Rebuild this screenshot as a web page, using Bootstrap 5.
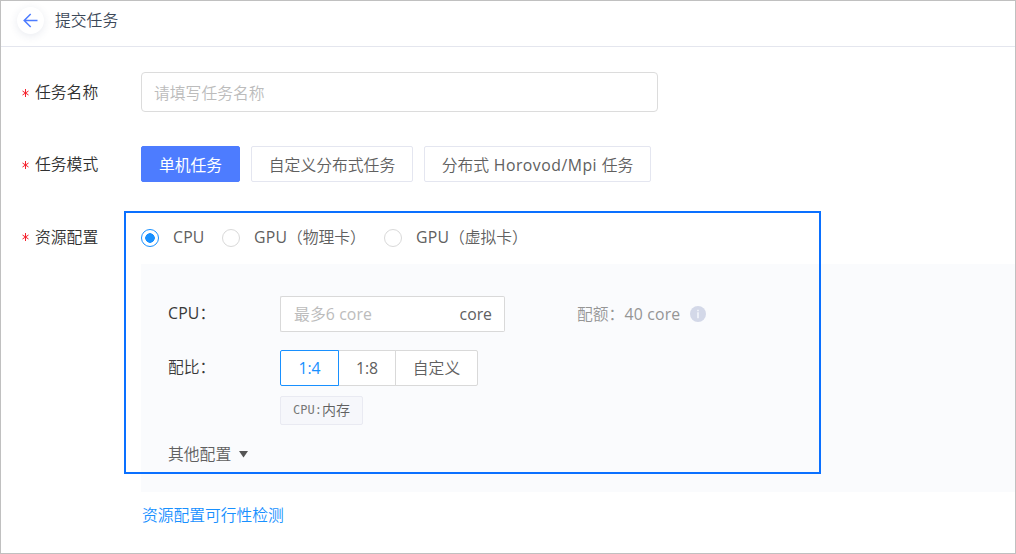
<!DOCTYPE html>
<html lang="zh-CN">
<head>
<meta charset="utf-8">
<meta name="viewport" content="width=device-width, initial-scale=1">
<title>提交任务</title>
<link href="https://cdn.jsdelivr.net/npm/bootstrap@5.3.0/dist/css/bootstrap.min.css" rel="stylesheet">
<style>
  body { font-family: "Open Sans", "Noto Sans CJK SC", sans-serif; font-size: 15.8px; font-weight: 350; line-height: 24px; color: #606060; background: #fff; }
  .page-frame { height: 554px; border: 1px solid #c0c0c0; }
  .page-head { height: 46px; padding: 0 0 7px 16px; border-bottom: 1px solid #e4e6ee; color: #3c4858; }
  .back-btn { width: 27px; height: 27px; border: 0; background: #fff; box-shadow: 0 2px 8px rgba(40, 60, 110, .1); margin-right: 11px; }
  .form-body { padding: 25px 0 0 20px; }
  .field-label { width: 120px; flex: none; color: #303030; }
  .req-mark { width: 8px; height: 8px; margin: 1px 5px 0 1px; }
  .name-input { width: 517px; height: 40px; padding: 2px 12px 0; border-color: #dcdcdc; border-radius: 4px; }
  .form-control { font-size: inherit; font-weight: inherit; }
  .form-control::placeholder { color: #bcbcbc; opacity: 1; }
  .mode-row { margin-top: 34px; height: 36px; }
  .mode-btns { gap: 11px; }
  .mode-btn { height: 36px; padding: 0; width: 162px; font-size: inherit; font-weight: inherit; border: 1px solid #e4e6f0; border-radius: 2px; color: #606060; background: #fff; white-space: nowrap; line-height: 36px; }
  .mode-btn.active { width: 99px; color: #fff; background: #4d7cff; border-color: #4d7cff; font-weight: 400; }
  .mode-btn.wide-mode { width: 227px; }
  .latin-txt { font-weight: 400; letter-spacing: .2px; }
  .wide-mode .latin-txt { letter-spacing: .5px; }
  .resource-row { margin-top: 29px; }
  .radio-line { height: 53px; }
  .field-label.radio-line, .radio-line label { padding-bottom: 2px; }
  .form-check-input.res-radio { width: 18px; height: 18px; margin: 0; border: 1px solid #d9d9d9; background: #fff; flex: none; }
  .form-check-input.res-radio:checked { border-color: #1890ff; background: radial-gradient(circle, #1890ff 0 4.5px, #fff 5px); }
  .r-one { width: 63px; padding-left: 14px; }
  .r-two { width: 144px; padding-left: 14px; }
  .r-three { padding-left: 14px; }
  .r-two, .r-three { letter-spacing: -.1px; }
  .res-panel { height: 228px; padding: 32px 0 0 27px; background: #fafbfd; }
  .panel-label { width: 112px; flex: none; padding-bottom: 2px; color: #383838; }
  .core-group { width: 225px; height: 36px; flex: none; }
  .core-group .form-control { padding: 2px 0 0 13px; border-color: #d9d9d9; border-right: 0; border-radius: 2px; font-weight: 400; }
  .core-group .form-control::placeholder { letter-spacing: .1px; }
  .core-group .input-group-text { padding: 1px 12px 0; font-size: inherit; font-weight: 400; color: #606060; background: #fff; border-color: #d9d9d9; border-radius: 2px; }
  .quota { margin-left: 72px; color: #959595; }
  .quota svg { margin-left: 10px; }
  .ratio-row { margin-top: 18px; }
  .ratio-btn { width: 58px; height: 36px; padding: 0; border: 1px solid #d9d9d9; border-radius: 2px; font-size: inherit; font-weight: 400; line-height: 35px; background: #fff; color: #606060; flex: none; }
  .ratio-btn.active { width: 59px; color: #1890ff; background: #fff; border-color: #1890ff; }
  .ratio-btn.custom-ratio { width: 83px; font-weight: inherit; }
  .hint-tag { width: 83px; height: 29px; margin: 10px 0 0 112px; padding-bottom: 1px; border: 1px solid #e9eaf2; background: #f6f7fb; border-radius: 2px; font-size: 14px; }
  .hint-tag .mono-txt { font-family: "DejaVu Sans Mono", monospace; font-size: 12px; font-weight: 400; color: #777; }
  .more-toggle { margin-top: 17px; }
  .check-link { display: inline-block; margin: 11px 0 0 1px; color: #1890ff; letter-spacing: -.05px; }
  .focus-box { left: -17px; top: 0; width: 697px; height: 263px; border: 2px solid #0a70ff; pointer-events: none; }
</style>
</head>
<body>
<div class="page-frame overflow-hidden">
  <header class="page-head d-flex align-items-center">
    <button class="back-btn rounded-circle d-flex align-items-center justify-content-center p-0" aria-label="返回">
      <svg width="15" height="15" viewBox="0 0 15 15" fill="none" stroke="#4d7cff" stroke-width="1.5"><path d="M14.5 7.5H1.5M7.7 1L1.2 7.5L7.7 14"/></svg>
    </button>
    <span>提交任务</span>
  </header>

  <main class="form-body">
    <div class="d-flex align-items-center">
      <label class="field-label d-flex align-items-center" for="taskName"><svg class="req-mark" viewBox="0 0 8 8" stroke="#f5222d" stroke-width="1"><path d="M3.5 0V8M.5 2L6.5 6M6.5 2L.5 6"/></svg>任务名称</label>
      <input id="taskName" class="form-control name-input" type="text" placeholder="请填写任务名称">
    </div>

    <div class="mode-row d-flex align-items-center">
      <div class="field-label d-flex align-items-center"><svg class="req-mark" viewBox="0 0 8 8" stroke="#f5222d" stroke-width="1"><path d="M3.5 0V8M.5 2L6.5 6M6.5 2L.5 6"/></svg>任务模式</div>
      <div class="mode-btns d-flex">
        <button class="btn mode-btn active">单机任务</button>
        <button class="btn mode-btn">自定义分布式任务</button>
        <button class="btn mode-btn wide-mode">分布式<span class="latin-txt"> Horovod/Mpi </span>任务</button>
      </div>
    </div>

    <div class="resource-row d-flex align-items-start">
      <div class="field-label radio-line d-flex align-items-center"><svg class="req-mark" viewBox="0 0 8 8" stroke="#f5222d" stroke-width="1"><path d="M3.5 0V8M.5 2L6.5 6M6.5 2L.5 6"/></svg>资源配置</div>
      <div class="flex-grow-1 position-relative">
        <div class="focus-box position-absolute"></div>
        <div class="radio-line d-flex align-items-center text-nowrap">
          <input class="form-check-input res-radio" type="radio" name="res" id="r1" checked><label class="r-one latin-txt" for="r1">CPU</label>
          <input class="form-check-input res-radio" type="radio" name="res" id="r2"><label class="r-two" for="r2"><span class="latin-txt">GPU</span>（物理卡）</label>
          <input class="form-check-input res-radio" type="radio" name="res" id="r3"><label class="r-three" for="r3"><span class="latin-txt">GPU</span>（虚拟卡）</label>
        </div>
        <div class="res-panel">
          <div class="d-flex align-items-center">
            <div class="panel-label"><span class="latin-txt">CPU</span>：</div>
            <div class="input-group core-group">
              <input class="form-control" type="text" placeholder="最多6 core" aria-label="CPU">
              <span class="input-group-text border-start-0">core</span>
            </div>
            <div class="quota d-flex align-items-center">配额：<span class="latin-txt">40 core</span>
              <svg width="16" height="16" viewBox="0 0 16 16"><circle cx="8" cy="8" r="8" fill="#d3d8e8"/><path d="M7.2 3.8h1.6v1.5H7.2zM7.2 6.3h1.6v6H7.2z" fill="#f3f5fb"/></svg>
            </div>
          </div>
          <div class="ratio-row d-flex align-items-center">
            <div class="panel-label">配比：</div>
            <div class="btn-group">
              <button class="btn ratio-btn active">1:4</button>
              <button class="btn ratio-btn">1:8</button>
              <button class="btn ratio-btn custom-ratio">自定义</button>
            </div>
          </div>
          <div class="hint-tag d-flex align-items-center justify-content-center"><span class="mono-txt">CPU:</span>内存</div>
          <div class="more-toggle d-flex align-items-center">其他配置<svg class="ms-2" width="9" height="7" viewBox="0 0 9 7"><path d="M0 0H9L4.5 6.5Z" fill="#555"/></svg></div>
        </div>
        <a class="check-link text-decoration-none" href="#">资源配置可行性检测</a>
      </div>
    </div>
  </main>
</div>
<script src="https://cdn.jsdelivr.net/npm/bootstrap@5.3.0/dist/js/bootstrap.bundle.min.js"></script>
</body>
</html>
